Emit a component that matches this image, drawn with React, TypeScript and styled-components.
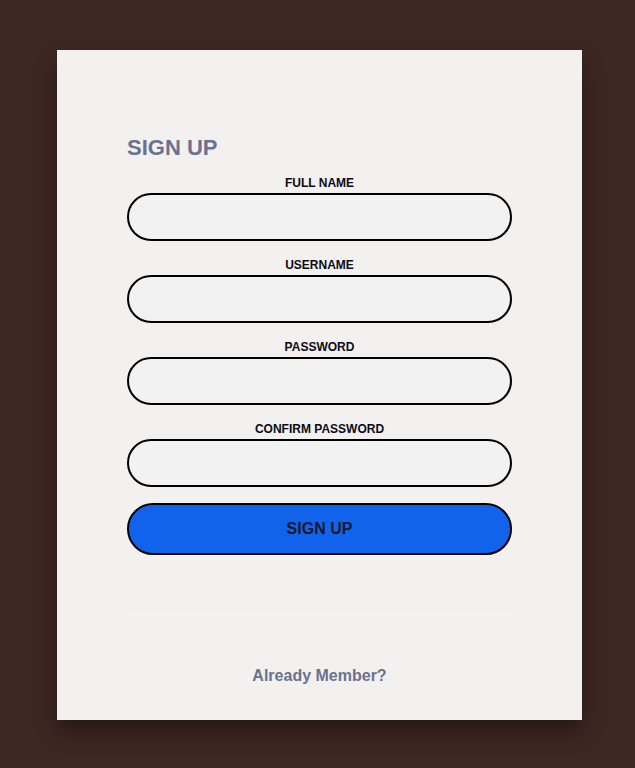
import { FC } from "react";
import styled, { createGlobalStyle } from "styled-components";

const GlobalStyle = createGlobalStyle`
  html, body {
    margin: 0;
    padding: 0;
    background: #3d2723;
    font-family: "Liberation Sans", Arial, sans-serif;
  }
`;

const fields = ["FULL NAME", "USERNAME", "PASSWORD", "CONFIRM PASSWORD"];

const App: FC = () => {
  return (
    <>
      <GlobalStyle />
      <PageStyle>
        <CardStyle>
          <Title>SIGN UP</Title>
          <form onSubmit={(e) => e.preventDefault()}>
            {fields.map((name) => (
              <Field key={name}>
                <Label>{name}</Label>
                <Input type={name.includes("PASSWORD") ? "password" : "text"} />
              </Field>
            ))}
            <SubmitButton type="submit">SIGN UP</SubmitButton>
          </form>
          <Divider />
          <MemberLink href="#">Already Member?</MemberLink>
        </CardStyle>
      </PageStyle>
    </>
  );
};

const PageStyle = styled.div`
  min-height: 768px;
  padding-top: 50px;
  box-sizing: border-box;
`;

const CardStyle = styled.div`
  margin-left: 57px;
  width: 525px;
  height: 670px;
  box-sizing: border-box;
  padding: 86px 70px 0;
  background: #f2f1f0;
  box-shadow: 0 12px 18px rgba(20, 8, 6, 0.45);
`;

const Title = styled.h2`
  margin: 0 0 16px;
  font-size: 22px;
  line-height: 24px;
  font-weight: 700;
  color: #6a7191;
`;

const Field = styled.div`
  display: flex;
  flex-direction: column;
  align-items: center;
  margin-bottom: 17px;
`;

const Label = styled.label`
  font-size: 12px;
  line-height: 15px;
  font-weight: 700;
  color: #0a0a14;
  margin-bottom: 2px;
`;

const Input = styled.input`
  width: 100%;
  height: 48px;
  box-sizing: border-box;
  border: 2px solid #000;
  border-radius: 24px;
  background: #f2f2f2;
  padding: 0 20px;
  font-size: 16px;
  outline: none;
`;

const SubmitButton = styled.button`
  display: block;
  width: 100%;
  height: 52px;
  margin-top: -1px;
  border: 2px solid #000;
  border-radius: 26px;
  background: #1263ec;
  color: #14182a;
  font-family: "Liberation Sans", Arial, sans-serif;
  font-size: 16px;
  font-weight: 700;
  cursor: pointer;
`;

const Divider = styled.div`
  height: 2px;
  margin-top: 59px;
  background: #f6f5f4;
`;

const MemberLink = styled.a`
  display: block;
  margin-top: 50px;
  text-align: center;
  font-size: 16px;
  line-height: 19px;
  font-weight: 700;
  color: #6a7191;
  text-decoration: none;
`;

export default App;
